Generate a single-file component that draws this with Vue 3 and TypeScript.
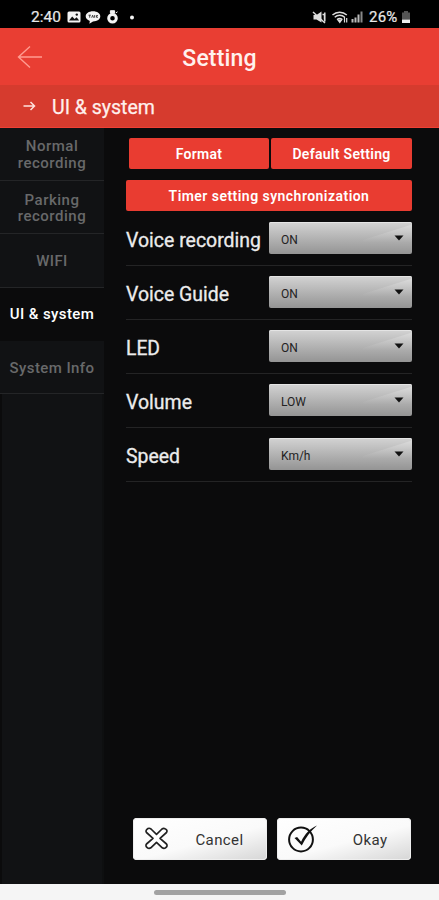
<script setup lang="ts">
import { ref } from 'vue'

interface Tab { id: string; lines: string[] }
interface Option { id: string; label: string; value: string; width: number }

const tabs: Tab[] = [
  { id: 'normal', lines: ['Normal', 'recording'] },
  { id: 'parking', lines: ['Parking', 'recording'] },
  { id: 'wifi', lines: ['WIFI'] },
  { id: 'ui', lines: ['UI & system'] },
  { id: 'info', lines: ['System Info'] },
]
const active = ref('ui')

const options: Option[] = [
  { id: 'voice-recording', label: 'Voice recording', value: 'ON', width: 135 },
  { id: 'voice-guide', label: 'Voice Guide', value: 'ON', width: 103 },
  { id: 'led', label: 'LED', value: 'ON', width: 34 },
  { id: 'volume', label: 'Volume', value: 'LOW', width: 66 },
  { id: 'speed', label: 'Speed', value: 'Km/h', width: 54 },
]
</script>

<template>
  <div class="screen">
    <div class="status">
      <span class="clock">2:40</span>
      <svg class="notif" width="70" height="16" viewBox="0 0 70 16">
        <rect x="0.5" y="2.5" width="13" height="11" rx="1.5" fill="#f4f4f4" />
        <path d="M2 11.5l3.2-4 2.4 2.6 2-1.8 2.6 3.2z" fill="#111" />
        <circle cx="9.8" cy="5.6" r="1.2" fill="#111" />
        <path d="M26 2.2c4.200 0 7.300 2.200 7.300 5.100s-3 5.200-7.300 5.200l-3.600 2.300.4-2.900c-2.500-.8-4.100-2.500-4.100-4.600 0-2.900 3.100-5.100 7.300-5.100z" fill="#f4f4f4" />
        <path d="M21.500 6.200h2.400M22.700 6.200v2.500M24.700 8.700l.9-2.500.9 2.500M27.600 6.100v2.600M29.400 6.100v2.600M31 6.200l-1.500 1.200 1.500 1.300" fill="none" stroke="#333" stroke-width=".9" />
        <circle cx="45.500" cy="9.300" r="3.800" fill="none" stroke="#f4f4f4" stroke-width="3" />
        <path d="M43.400 1.700h4.200v2.600h-4.200zM48.700 4l1.800-1.200" fill="#f4f4f4" stroke="#f4f4f4" />
        <circle cx="65" cy="8.500" r="2" fill="#f4f4f4" />
      </svg>
      <svg class="signals" width="54" height="16" viewBox="0 0 54 16">
        <path d="M1.500 6h3l5-3.500v11L4.500 10.500h-3z" fill="#ddd" />
        <path d="M1 3l12 11M10.500 5.500h2v5M12.800 3.500v9" fill="none" stroke="#ddd" stroke-width="1.500" />
        <path d="M20.500 6c4-3.600 10.300-3.600 14.300 0M22.700 8.200c2.900-2.500 7.100-2.500 10 0M25 10.600c1.600-1.300 3.700-1.300 5.300 0" fill="none" stroke="#ddd" stroke-width="1.500" />
        <path d="M26 11h3.500l-1.700 2.500zM32.500 13.500V8M34.700 13.500V9" fill="#ddd" stroke="#ddd" stroke-width="1.200" />
        <path d="M40.500 13.500v-3.500M43.500 13.500v-5M46.500 13.500v-8" stroke="#bbb" stroke-width="2" />
        <path d="M49.500 13.500v-11" stroke="#888" stroke-width="2" />
      </svg>
      <span class="percent">26%</span>
      <svg class="battery" width="10" height="14" viewBox="0 0 10 14">
        <path d="M3 1h4v1.500h2v7H1v-7h2z" fill="#555" />
        <path d="M1 9.500h8V13H1z" fill="#eee" />
      </svg>
    </div>

    <header class="header">
      <svg class="back" width="26" height="24" viewBox="0 0 26 24">
        <path d="M1.500 12H25M13 1.500L1.500 12L13 22.500" fill="none" stroke="#ff9c91" stroke-width="1.400" />
      </svg>
      <h1>Setting</h1>
    </header>

    <div class="crumb">
      <svg class="arrow" width="13" height="10" viewBox="0 0 13 10">
        <path d="M.5 5H11M7.500 1l4 4-4 4" fill="none" stroke="#ffe2dd" stroke-width="1.500" />
      </svg>
      <span>UI &amp; system</span>
    </div>

    <div class="body">
      <nav class="tabs">
        <button v-for="t in tabs" :key="t.id" class="tab" :class="{ active: active === t.id }" @click="active = t.id">
          <span v-for="line in t.lines" :key="line">{{ line }}</span>
        </button>
      </nav>

      <main class="panel">
        <div class="pair">
          <button class="red">Format</button>
          <button class="red">Default Setting</button>
        </div>
        <button class="red sync">Timer setting synchronization</button>

        <div class="options">
          <div v-for="o in options" :key="o.id" class="option">
            <svg class="label" :width="o.width + 2" height="28">
              <text x="0" y="20" :textLength="o.width" lengthAdjust="spacingAndGlyphs">{{ o.label }}</text>
            </svg>
            <button class="select">
              <span>{{ o.value }}</span>
              <svg class="caret" width="10" height="6" viewBox="0 0 10 6"><path d="M.5.5h9L5 5.500z" fill="#111" /></svg>
            </button>
          </div>
        </div>

        <div class="actions">
          <button class="action">
            <svg width="26" height="26" viewBox="0 0 26 26">
              <path d="M4 2.500Q5.500 1.800 7 3l5.500 5.300L18 3q1.500-1.200 3-.3 3 1.500 1.500 3.800L16 12.300l6.500 5.700q1.500 2-1 3.800-1.500 1.200-3.200 0l-5.800-5.500-5.700 5.500q-1.800 1.200-3.300 0-2.500-1.800-1-3.800L9 12.300 2.500 6.500Q1 4.500 4 2.500z" fill="#fff" stroke="#222" stroke-width="1.700" stroke-linejoin="round" />
            </svg>
            <span>Cancel</span>
          </button>
          <button class="action">
            <svg class="check" width="30" height="28" viewBox="0 0 30 28">
              <circle cx="13" cy="14.500" r="11.900" fill="none" stroke="#111" stroke-width="2" />
              <path d="M6.500 13l2.600-1 4 4.700C17 8.500 22 3.500 29 .5 22.500 6 17.500 13 13.800 20.500z" fill="#111" />
            </svg>
            <span>Okay</span>
          </button>
        </div>
      </main>
    </div>

    <footer class="gesture"><i></i></footer>
  </div>
</template>

<style>
body { background: #000; }
</style>

<style scoped>
.screen {
  width: 439px;
  height: 900px;
  display: flex;
  flex-direction: column;
  overflow: hidden;
  background: #0b0b0c;
  font-family: Roboto, "Liberation Sans", sans-serif;
  color: #fff;
}
button { font-family: inherit; border: 0; margin: 0; padding: 0; }
svg { display: block; flex: none; }

.status {
  height: 28px;
  flex: none;
  display: flex;
  align-items: center;
  padding: 6px 28px 0 31px;
  box-sizing: border-box;
  background: #000;
  color: #e8e8e8;
}
.clock { width: 36px; font-size: 15.500px; -webkit-text-stroke: .2px #e8e8e8; }
.signals { margin-left: auto; }
.percent { width: 31px; margin-left: 3px; font-size: 15px; letter-spacing: .2px; -webkit-text-stroke: .2px #e8e8e8; }
.battery { margin-left: 1px; }

.header {
  height: 57px;
  flex: none;
  display: grid;
  grid-template-columns: 60px 1fr 60px;
  align-items: center;
  background: #e93e33;
}
.back { margin-left: 17px; }
h1 { margin: 4px 0 0; text-align: center; font-size: 23px; font-weight: 500; line-height: 28px; letter-spacing: .15px; color: #fff1ee; }

.crumb {
  height: 43px;
  flex: none;
  display: flex;
  align-items: center;
  gap: 16px;
  padding-left: 23px;
  box-sizing: border-box;
  background: #d63b2e;
  border-bottom: 1px solid #ef4035;
  font-size: 19.500px;
  color: #fff0ed;
  -webkit-text-stroke: .25px #fff0ed;
}
.crumb span { padding-top: 2px; }

.body { height: 756px; flex: none; display: flex; }
.tabs { width: 104px; display: flex; flex-direction: column; background: #111214; border-left: 2px solid #0b0b0c; border-right: 2px solid #0e0f10; box-sizing: border-box; }
.tab {
  height: 53.300px;
  flex: none;
  display: flex;
  flex-direction: column;
  align-items: center;
  justify-content: center;
  margin: 0 -2px;
  padding-top: 2px;
  box-sizing: border-box;
  background: #111214;
  border-bottom: 1px solid #242527;
  font-size: 15px;
  line-height: 16.500px;
  font-weight: 500;
  letter-spacing: .4px;
  color: #68696a;
}
.tab:nth-child(-n + 2) { letter-spacing: .5px; }
.tab:first-child { height: 53px; padding-top: 1px; }
.tab.active { background: #0b0b0c; border-bottom-color: #0b0b0c; color: #fff; }

.panel { flex: 1; display: flex; flex-direction: column; padding: 10px 27px 24px 22px; }
.pair { display: grid; grid-template-columns: 140px 141px; gap: 2px; padding-left: 3px; }
.red { height: 31px; padding-top: 1px; border-radius: 2px; background: #e93c31; color: #fff; font-size: 14px; font-weight: 600; letter-spacing: .3px; }
.sync { margin-top: 11px; letter-spacing: .46px; }
.options { display: flex; flex-direction: column; margin-top: 1px; }
.option {
  height: 54px;
  display: flex;
  align-items: flex-start;
  justify-content: space-between;
  padding-top: 10px;
  box-sizing: border-box;
  border-bottom: 1px solid #242425;
}
.label { margin-top: 5px; overflow: visible; }
.label text { font-size: 19.500px; fill: #ececec; stroke: #ececec; stroke-width: .3px; }
.select {
  position: relative;
  width: 143px;
  height: 32px;
  display: flex;
  align-items: center;
  justify-content: space-between;
  padding: 0 8px 0 12px;
  border-radius: 2px;
  background: linear-gradient(#d3d3d3, #949494);
  box-shadow: inset 0 1px #e4e4e4;
  font-size: 12px;
  color: #222;
}
.select::before {
  content: "";
  position: absolute;
  inset: 1px 0 0 94px;
  background: linear-gradient(rgba(255, 255, 255, .28), rgba(255, 255, 255, 0) 62%);
  clip-path: polygon(0 55%, 100% 5%, 100% 62%, 0 62%);
}
.select span { padding-top: 3px; }
.caret { position: relative; }

.actions { display: grid; grid-template-columns: 134px 134px; gap: 10px; margin-top: auto; margin-left: 7px; }
.action {
  height: 42px;
  display: flex;
  align-items: center;
  padding: 0 23.500px 0 11px;
  justify-content: space-between;
  border-radius: 4px;
  background: linear-gradient(165deg, #fff 0%, #fafafa 55%, #d6d6d6 100%);
  box-shadow: inset 0 0 0 1px #eee;
  font-size: 15px;
  letter-spacing: .4px;
  color: #333;
}
.action span { padding-top: 2px; }

.gesture { flex: 1; display: flex; justify-content: center; align-items: center; background: #f5f5f5; }
.gesture i { width: 132px; height: 5px; border-radius: 3px; background: #a2a2a2; }
</style>
